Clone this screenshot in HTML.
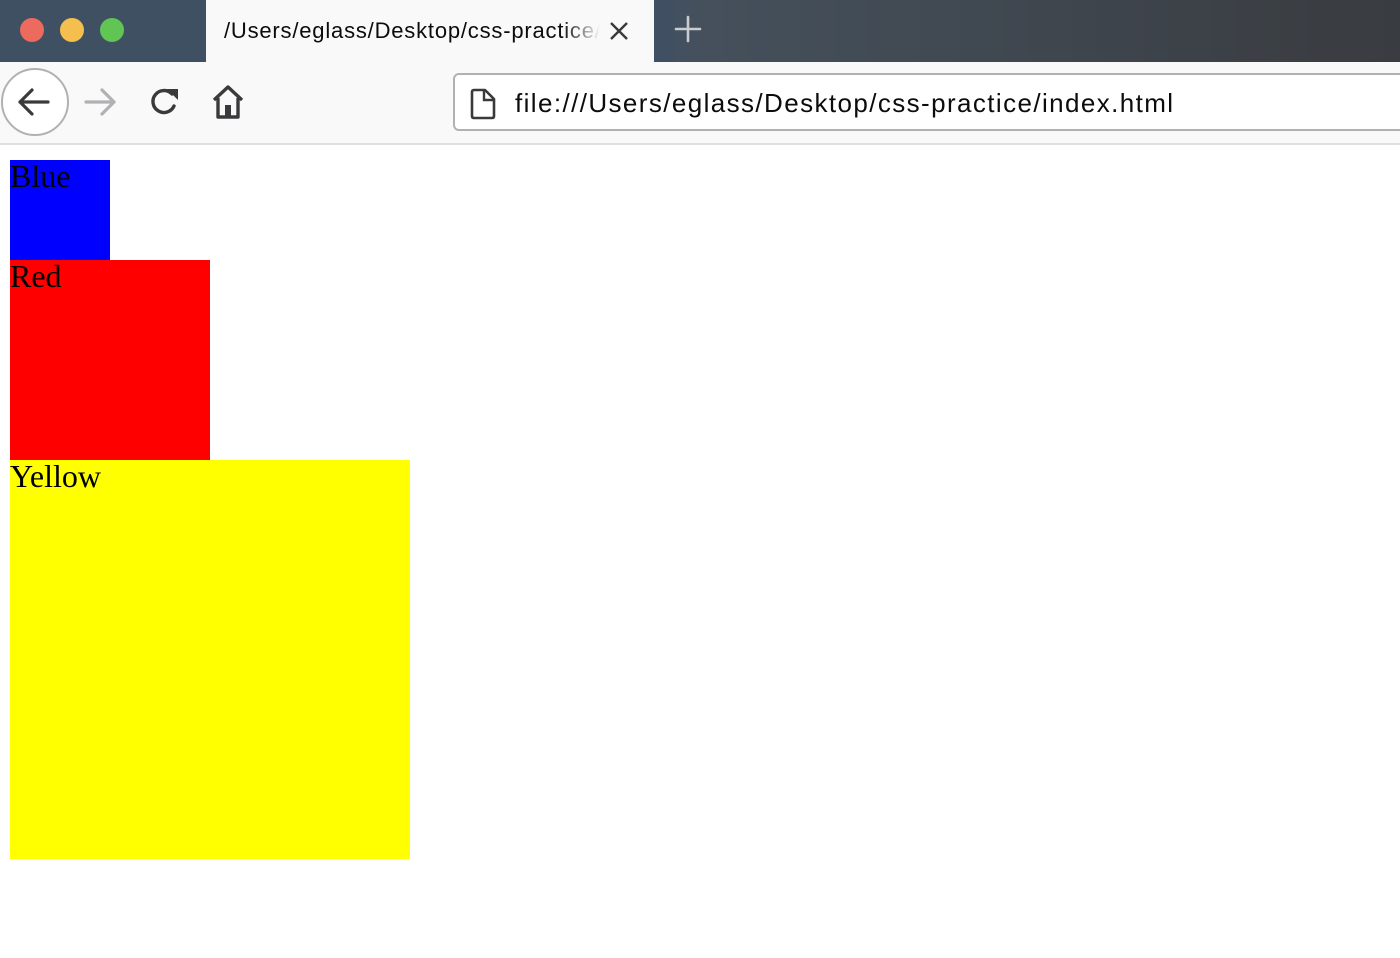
<!DOCTYPE html>
<html><head><meta charset="utf-8"><style>
html,body{margin:0;padding:0;width:1400px;height:958px;overflow:hidden;background:#fff;}
.tb{position:absolute;left:0;top:0;width:1400px;height:62px;background:linear-gradient(90deg,#3f5063 0%,#3f5063 47%,#45505c 50%,#393c40 100%);}
.dot{position:absolute;top:18px;width:24px;height:24px;border-radius:50%;}
.tab{position:absolute;left:206px;top:0;width:448px;height:62px;background:#f9f9fa;}
.tabt{position:absolute;left:18px;top:18px;font:22px "Liberation Sans",sans-serif;letter-spacing:0.8px;color:#0c0c0d;white-space:nowrap;width:376px;overflow:hidden;-webkit-mask-image:linear-gradient(90deg,#000 90%,transparent);}
.bar{position:absolute;left:0;top:62px;width:1400px;height:81px;background:#f9f9fa;border-bottom:2px solid #e0e0e2;}
.url{position:absolute;left:453px;top:11px;width:960px;height:58px;background:#fff;border:2px solid #b1b1b3;border-radius:6px;box-sizing:border-box;}
.urlt{position:absolute;left:60px;top:13px;font:26px "Liberation Sans",sans-serif;letter-spacing:1.4px;color:#0c0c0d;white-space:nowrap;}
.b{position:absolute;left:10px;font:32px "Liberation Serif",serif;color:#000;line-height:32px;}
</style></head><body>
<div class="tb">
<div class="dot" style="left:20px;background:#ed6a5e"></div>
<div class="dot" style="left:60px;background:#f5bf4f"></div>
<div class="dot" style="left:100px;background:#61c554"></div>
<div class="tab"><div class="tabt">/Users/eglass/Desktop/css-practice/index.html</div>
<svg style="position:absolute;left:402px;top:20px" width="22" height="22" viewBox="0 0 22 22"><path d="M3 3L19 19M19 3L3 19" stroke="#3a3a3c" stroke-width="2.4"/></svg></div>
<svg style="position:absolute;left:673px;top:14px" width="30" height="30" viewBox="0 0 30 30"><path d="M15 3V27M3 15H27" stroke="#c8cbcf" stroke-width="2.6" stroke-linecap="round"/></svg>
</div>
<div class="bar">
<div style="position:absolute;left:1px;top:6px;width:64px;height:64px;border-radius:50%;border:2px solid #b1b1b3;background:#fff"></div>
<svg style="position:absolute;left:16px;top:24px" width="36" height="32" viewBox="0 0 36 32"><path d="M32 16H4M16 4L4 16L16 28" stroke="#3a3a3c" stroke-width="3.2" fill="none" stroke-linecap="round" stroke-linejoin="round"/></svg>
<svg style="position:absolute;left:82px;top:24px" width="36" height="32" viewBox="0 0 36 32"><path d="M4 16H32M20 4L32 16L20 28" stroke="#b1b1b3" stroke-width="3.2" fill="none" stroke-linecap="round" stroke-linejoin="round"/></svg>
<svg style="position:absolute;left:148px;top:24px" width="34" height="34" viewBox="0 0 34 34"><path d="M26 20A11 11 0 1 1 24 8" stroke="#3a3a3c" stroke-width="3.4" fill="none" stroke-linecap="round"/><path d="M19 3H30V14Z" fill="#3a3a3c"/></svg>
<svg style="position:absolute;left:211px;top:22px" width="34" height="36" viewBox="0 0 34 36"><path d="M3 16L17 3L31 16M7 14V33H27V14" stroke="#3a3a3c" stroke-width="3.4" fill="none" stroke-linejoin="round"/><rect x="14" y="21" width="6" height="12" fill="#3a3a3c"/></svg>
<div class="url">
<svg style="position:absolute;left:14px;top:13px" width="28" height="32" viewBox="0 0 28 32"><path d="M3 4Q3 2 5 2H16L25 11V28Q25 30 23 30H5Q3 30 3 28Z" stroke="#3a3a3c" stroke-width="2.6" fill="none" stroke-linejoin="round"/><path d="M15 2V12H25" stroke="#3a3a3c" stroke-width="2.4" fill="none"/></svg>
<div class="urlt">file:///Users/eglass/Desktop/css-practice/index.html</div></div>
</div>
<div class="b" style="top:160px;width:100px;height:100px;background:#00f">Blue</div>
<div class="b" style="top:260px;width:200px;height:200px;background:#f00">Red</div>
<div class="b" style="top:460px;width:400px;height:399px;background:#ff0">Yellow</div>
</body></html>
